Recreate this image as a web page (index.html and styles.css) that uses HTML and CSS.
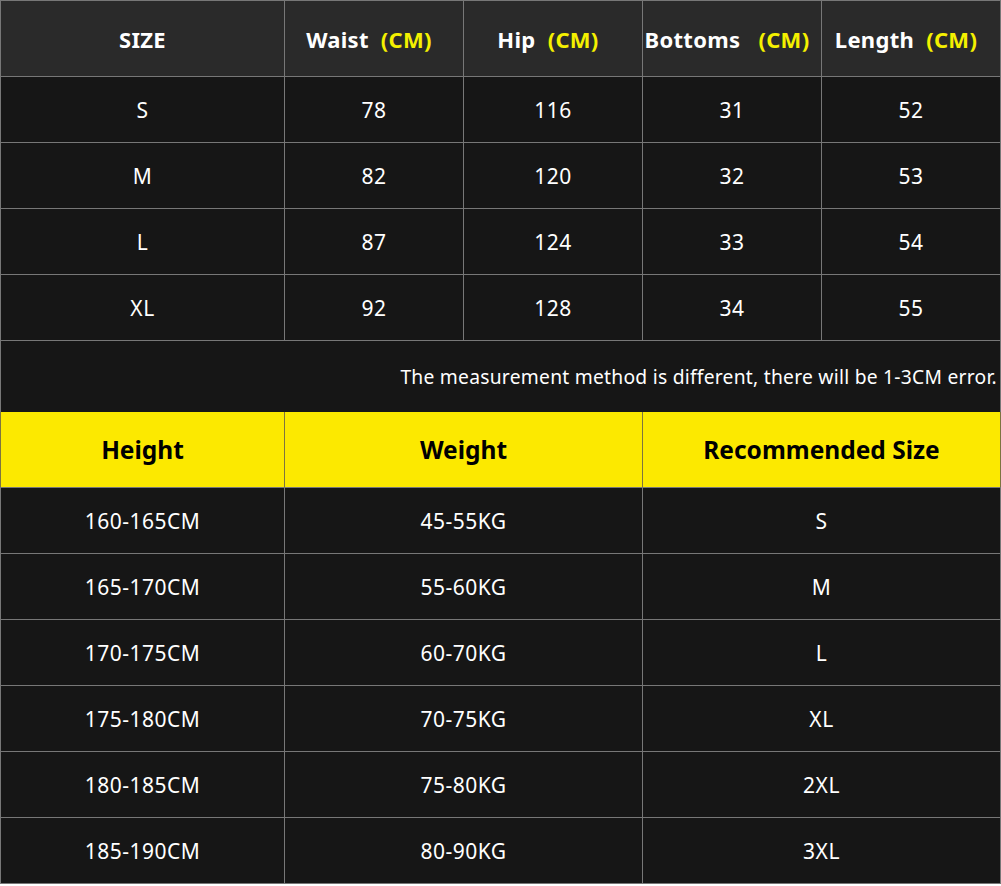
FILE: index.html
```html
<!DOCTYPE html>
<html lang="en">
<head>
<meta charset="utf-8">
<title>Size Chart</title>
<link rel="stylesheet" href="styles.css">
</head>
<body>
<table class="chart">
  <colgroup>
    <col class="c-first">
    <col class="c-mid">
    <col class="c-mid">
    <col class="c-mid">
    <col class="c-mid">
  </colgroup>
  <tr class="head">
    <th>SIZE</th>
    <th class="with-unit">Waist&nbsp;&nbsp;<span class="unit">(CM)</span></th>
    <th class="with-unit">Hip&nbsp;&nbsp;<span class="unit">(CM)</span></th>
    <th class="with-unit">Bottoms&nbsp;&nbsp;&nbsp;<span class="unit">(CM)</span></th>
    <th class="with-unit">Length&nbsp;&nbsp;<span class="unit">(CM)</span></th>
  </tr>
  <tr class="row"><td>S</td><td>78</td><td>116</td><td>31</td><td>52</td></tr>
  <tr class="row"><td>M</td><td>82</td><td>120</td><td>32</td><td>53</td></tr>
  <tr class="row"><td>L</td><td>87</td><td>124</td><td>33</td><td>54</td></tr>
  <tr class="row"><td>XL</td><td>92</td><td>128</td><td>34</td><td>55</td></tr>
  <tr class="note"><td colspan="5">The measurement method is different, there will be 1-3CM error.</td></tr>
  <tr class="yhead">
    <th>Height</th>
    <th colspan="2">Weight</th>
    <th colspan="2">Recommended Size</th>
  </tr>
  <tr class="row"><td>160-165CM</td><td colspan="2">45-55KG</td><td colspan="2">S</td></tr>
  <tr class="row"><td>165-170CM</td><td colspan="2">55-60KG</td><td colspan="2">M</td></tr>
  <tr class="row"><td>170-175CM</td><td colspan="2">60-70KG</td><td colspan="2">L</td></tr>
  <tr class="row"><td>175-180CM</td><td colspan="2">70-75KG</td><td colspan="2">XL</td></tr>
  <tr class="row"><td>180-185CM</td><td colspan="2">75-80KG</td><td colspan="2">2XL</td></tr>
  <tr class="row"><td>185-190CM</td><td colspan="2">80-90KG</td><td colspan="2">3XL</td></tr>
</table>
</body>
</html>
```

FILE: styles.css
```css
html, body {
  margin: 0;
  padding: 0;
  background: #ffffff;
}

.chart {
  width: 1000px;
  border-collapse: collapse;
  table-layout: fixed;
  font-family: "Noto Sans", "Open Sans", sans-serif;
  color: #ffffff;
  background: #161616;
}

.c-first { width: 284px; }
.c-mid { width: 179px; }

.chart th,
.chart td {
  border: 1px solid #777777;
  padding: 0;
  text-align: center;
  vertical-align: middle;
  white-space: nowrap;
  overflow: visible;
}

.head th {
  height: 75px;
  background: #2a2a2a;
  font-size: 22px;
  font-weight: 700;
  letter-spacing: 0.3px;
}

.head th.with-unit {
  padding-right: 10px;
}

.unit {
  color: #f4f000;
}

.row td {
  height: 65px;
  font-size: 21px;
  font-weight: 400;
  letter-spacing: 0.5px;
}

.note td {
  height: 71px;
  text-align: right;
  padding-right: 3px;
  font-size: 19.25px;
  letter-spacing: 0.25px;
  border-bottom: none;
}

.yhead th {
  height: 75px;
  background: #fce900;
  color: #000000;
  font-size: 24.5px;
  font-weight: 700;
  border-top: none;
  border-left-color: #7d7440;
  border-right-color: #7d7440;
}
```
